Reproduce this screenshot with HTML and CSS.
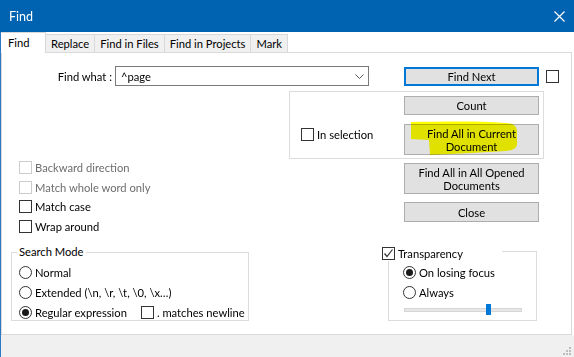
FILE: index.html
```html
<!DOCTYPE html>
<html lang="en">
<head>
    <meta charset="UTF-8">
    <title>Find</title>
    <link rel="stylesheet" href="styles.css">
</head>
<body>
    <div class="window">
        <div class="titlebar">
            <span class="title">Find</span>
            <svg class="close" width="11" height="11" viewBox="0 0 11 11">
                <path d="M0.5 0.5 L10.5 10.5 M10.5 0.5 L0.5 10.5" stroke="#fff" stroke-width="1.2"/>
            </svg>
        </div>

        <div class="tabs">
            <div class="tab active">Find</div>
            <div class="tab">Replace</div>
            <div class="tab">Find in Files</div>
            <div class="tab">Find in Projects</div>
            <div class="tab">Mark</div>
        </div>

        <div class="panel">
            <!-- 查找行 -->
            <div class="find-row">
                <div class="find-label">Find what :</div>
                <div class="combo">
                    <span>^page</span>
                    <svg class="chevron" width="9" height="5" viewBox="0 0 9 5">
                        <path d="M0.5 0.5 L4.5 4.5 L8.5 0.5" fill="none" stroke="#555" stroke-width="1"/>
                    </svg>
                </div>
                <button class="btn btn-default">Find Next</button>
                <span class="check top-check"></span>
            </div>

            <div class="middle">
                <div class="options">
                    <div class="opt disabled"><span class="check"></span>Backward direction</div>
                    <div class="opt disabled"><span class="check"></span>Match whole word only</div>
                    <div class="opt"><span class="check"></span>Match case</div>
                    <div class="opt"><span class="check"></span>Wrap around</div>
                </div>

                <div class="actions">
                    <div class="frame">
                        <div class="opt in-sel"><span class="check"></span>In selection</div>
                        <div class="frame-btns">
                            <button class="btn">Count</button>
                            <button class="btn btn-tall marked">Find All in Current<br>Document
                                <svg class="highlight" width="120" height="40" viewBox="0 -4 120 40">
                                    <path d="M6,-2 C46,-3 96,-3 107,0 Q112,2 112,8 L112,21 Q111,26 101,27 L66,29 L25,31 L24,16 L6,15 Z" fill="#ffff00"/>
                                </svg>
                            </button>
                        </div>
                    </div>
                    <div class="side-btns">
                        <button class="btn btn-tall">Find All in All Opened<br>Documents</button>
                        <button class="btn">Close</button>
                    </div>
                </div>
            </div>

            <!-- 分组框 -->
            <div class="groups">
                <div class="group search-mode">
                    <span class="group-title">Search Mode</span>
                    <div class="opt"><span class="radio"></span>Normal</div>
                    <div class="opt"><span class="radio"></span>Extended (\n, \r, \t, \0, \x…)</div>
                    <div class="opt"><span class="radio on"></span>Regular expression
                        <span class="check newline-check"></span>. matches newline</div>
                </div>

                <div class="group transparency">
                    <div class="group-title check-title">
                        <span class="check">
                            <svg width="11" height="11" viewBox="0 0 11 11">
                                <path d="M1.5 5.5 L4 8.5 L9.5 1.5" fill="none" stroke="#333" stroke-width="1.2"/>
                            </svg>
                        </span>Transparency
                    </div>
                    <div class="opt"><span class="radio on"></span>On losing focus</div>
                    <div class="opt"><span class="radio"></span>Always</div>
                    <div class="slider">
                        <div class="track"></div>
                        <div class="thumb"></div>
                    </div>
                </div>
            </div>
        </div>

        <div class="statusbar">
            <svg class="grip" width="9" height="9" viewBox="0 0 9 9">
                <rect x="6" y="0" width="2" height="2" fill="#bdbdbd"/>
                <rect x="3" y="3" width="2" height="2" fill="#bdbdbd"/>
                <rect x="6" y="3" width="2" height="2" fill="#bdbdbd"/>
                <rect x="0" y="6" width="2" height="2" fill="#bdbdbd"/>
                <rect x="3" y="6" width="2" height="2" fill="#bdbdbd"/>
                <rect x="6" y="6" width="2" height="2" fill="#bdbdbd"/>
            </svg>
        </div>
    </div>
</body>
</html>
```

FILE: styles.css
```css
:root {
    --accent: #0063b1;
    --focus: #0078d7;
    --btn-bg: #e1e1e1;
    --btn-border: #adadad;
    --line: #dcdcdc;
    --face: #f0f0f0;
}

* {
    margin: 0;
    padding: 0;
    box-sizing: border-box;
}

body {
    width: 574px;
    height: 357px;
    overflow: hidden;
    background: #fff;
    font-family: 'Lato', 'Noto Sans', sans-serif;
    font-size: 11.2px;
    color: #000;
}

.window {
    height: 357px;
    border-left: 1px solid #2b79c2;
    display: flex;
    flex-direction: column;
}

/* 标题栏 */
.titlebar {
    height: 32px;
    flex: none;
    background: var(--accent);
    color: #fff;
    display: flex;
    align-items: center;
    justify-content: space-between;
    padding: 0 9px 0 8px;
    margin-left: -1px;
}

.title {
    font-size: 12.5px;
    padding-left: 1px;
}

/* 标签页 */
.tabs {
    height: 20px;
    flex: none;
    display: flex;
    align-items: flex-end;
    position: relative;
    z-index: 1;
}

.tab {
    height: 18px;
    padding: 0 5px;
    background: var(--face);
    border: 1px solid #d9d9d9;
    border-bottom: none;
    border-left: none;
    display: flex;
    align-items: center;
    justify-content: center;
}

.tab.active {
    width: 45px;
    height: 21px;
    margin-bottom: -1px;
    background: #fff;
    justify-content: flex-start;
    padding: 0 0 2px 7px;
    border-left: none;
}

/* 主面板 */
.panel {
    width: 571px;
    height: 283px;
    flex: none;
    border: 1px solid #d9d9d9;
}

.find-row {
    margin-top: 13px;
    height: 20px;
    display: flex;
    align-items: center;
}

.find-label {
    width: 110px;
    text-align: right;
    margin-right: 3px;
}

.combo {
    width: 254px;
    height: 20px;
    border: 1px solid #7a7a7a;
    padding: 0 5px;
    display: flex;
    align-items: center;
    justify-content: space-between;
}

.chevron {
    margin-right: -1px;
}

.btn {
    width: 135px;
    height: 20px;
    border: 1px solid var(--btn-border);
    background: var(--btn-bg);
    font: inherit;
    color: #000;
    line-height: 13px;
    display: block;
}

.btn-default {
    margin-left: 35px;
    height: 19px;
    align-self: flex-end;
    border: 2px solid var(--focus);
}

.btn-tall {
    height: 31px;
}

.check {
    width: 13px;
    height: 13px;
    border: 1px solid #333;
    background: #fff;
    flex: none;
    margin-right: 3px;
    display: flex;
    align-items: center;
    justify-content: center;
}

.top-check {
    margin-left: 7px;
}

.radio {
    width: 13px;
    height: 13px;
    border: 1px solid #333;
    border-radius: 50%;
    background: #fff;
    flex: none;
    margin-right: 3px;
    display: flex;
    align-items: center;
    justify-content: center;
}

.radio.on::after {
    content: '';
    width: 7px;
    height: 7px;
    border-radius: 50%;
    background: #1a1a1a;
}

.opt {
    height: 13px;
    display: flex;
    align-items: center;
    white-space: nowrap;
}

.opt.disabled {
    color: #6d6d6d;
}

.opt.disabled .check {
    border-color: #cccccc;
}

/* 中间区域 */
.middle {
    margin-top: 5px;
    display: flex;
}

.options {
    width: 287px;
    padding: 70px 0 0 17px;
    display: flex;
    flex-direction: column;
    gap: 6.5px;
}

.actions {
    width: 255px;
}

.frame {
    height: 68px;
    border: 1px solid var(--line);
    display: flex;
}

.in-sel {
    width: 114px;
    padding-left: 11px;
    margin-top: 36px;
}

.frame-btns {
    padding-top: 4px;
    display: flex;
    flex-direction: column;
    gap: 9px;
}

.frame-btns .btn:first-child {
    height: 19px;
}

.marked {
    position: relative;
}

.highlight {
    position: absolute;
    left: 0;
    top: -5px;
    overflow: visible;
    mix-blend-mode: multiply;
    pointer-events: none;
}

.side-btns {
    margin: 4px 0 0 115px;
    display: flex;
    flex-direction: column;
    gap: 8px;
}

/* 分组框 */
.groups {
    margin-top: 19.5px;
    padding-left: 9px;
    display: flex;
    align-items: flex-start;
}

.group {
    position: relative;
    height: 70px;
    border: 1px solid var(--line);
    display: flex;
    flex-direction: column;
}

.group-title {
    position: absolute;
    background: #fff;
    white-space: nowrap;
}

.search-mode {
    width: 238px;
    height: 69px;
    padding: 13px 0 0 7px;
    gap: 7px;
}

.search-mode .group-title {
    left: 5px;
    top: -9px;
    padding: 0 2px;
    line-height: 15px;
}

.newline-check {
    margin-left: 14px;
}

.transparency {
    width: 149px;
    margin: -1px 0 0 139px;
    padding: 14px 0 0 14px;
    gap: 7px;
}

.check-title {
    left: -8px;
    top: -7px;
    width: 121px;
    height: 16px;
    padding-left: 1px;
    display: flex;
    align-items: center;
}

.slider {
    position: relative;
    height: 11px;
    margin: -2px 0 0 1px;
    width: 118px;
}

.track {
    margin-top: 4px;
    height: 4px;
    background: #e7e7e7;
    border: 1px solid #d6d6d6;
}

.thumb {
    position: absolute;
    left: 82px;
    top: 0;
    width: 5px;
    height: 11px;
    background: var(--focus);
}

/* 状态栏 */
.statusbar {
    flex: 1;
    background: var(--face);
    display: flex;
    justify-content: flex-end;
    align-items: flex-end;
    padding: 0 2px 1px 0;
}
```
